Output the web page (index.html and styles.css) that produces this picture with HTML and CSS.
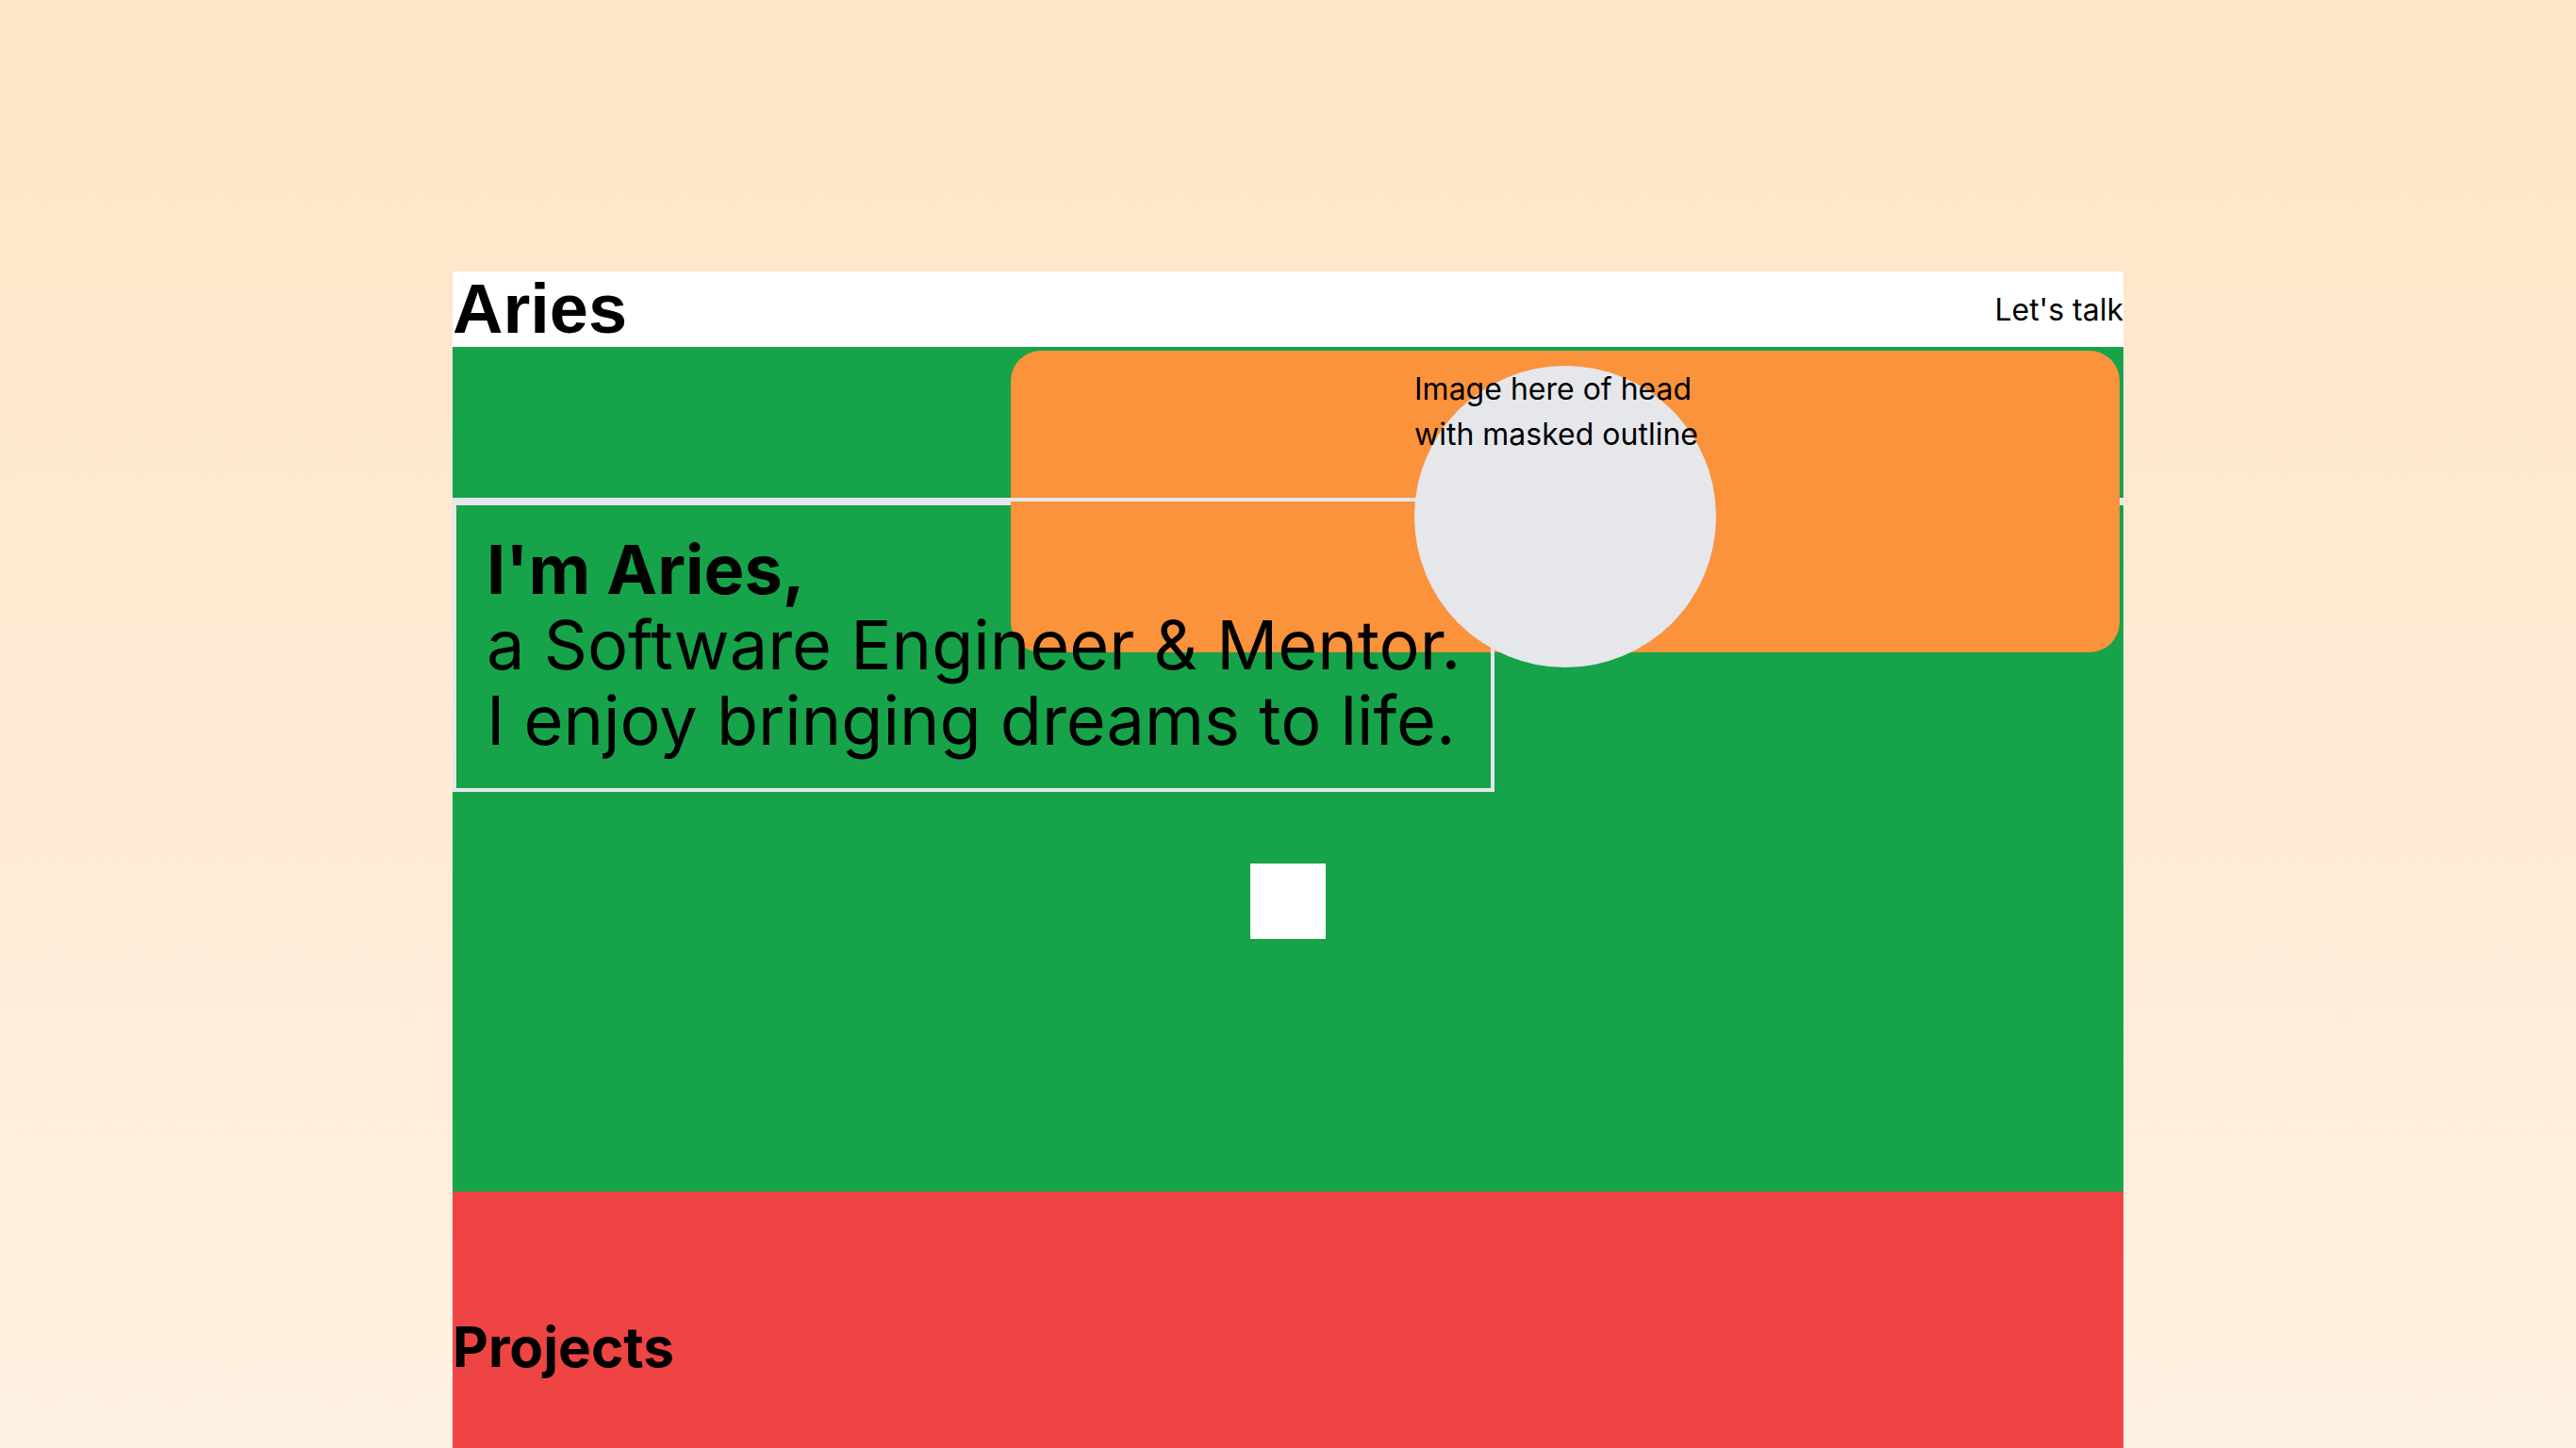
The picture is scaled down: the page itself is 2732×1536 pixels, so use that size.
FILE: index.html
```html
<!DOCTYPE html>
<html lang="en">
<head>
<meta charset="utf-8">
<title>Aries</title>
<link rel="stylesheet" href="styles.css">
</head>
<body>
<div class="page">
  <header class="site-header">
    <h1 class="logo">Aries</h1>
    <a class="cta" href="#contact">Let's talk</a>
  </header>
  <section class="hero">
    <div class="photo-panel">
      <div class="head-photo">
        <p class="photo-note">Image here of head with masked outline</p>
      </div>
    </div>
    <div class="hero-body">
      <div class="intro">
        <p class="intro-name">I'm Aries,</p>
        <p class="intro-line">a Software Engineer &amp; Mentor.</p>
        <p class="intro-line">I enjoy bringing dreams to life.</p>
      </div>
      <div class="square"></div>
    </div>
  </section>
  <section class="projects">
    <h2 class="projects-title">Projects</h2>
  </section>
</div>
</body>
</html>
```

FILE: styles.css
```css
html, body {
  margin: 0;
  padding: 0;
}

body {
  min-height: 100vh;
  background: linear-gradient(to bottom, #ffe5c7 0%, #fff1e2 100%);
  font-family: Inter, "Noto Sans", sans-serif;
  color: #000;
  overflow: hidden;
}

.page {
  width: 1772px;
  margin: 0 auto;
  padding-top: 288px;
}

.site-header {
  height: 80px;
  background: #ffffff;
  display: flex;
  align-items: center;
  justify-content: space-between;
}

.logo {
  margin: 0;
  font-family: "Liberation Sans", Arial, sans-serif;
  font-weight: 700;
  font-size: 74px;
  line-height: 72px;
}

.cta {
  font-family: Inter, sans-serif;
  font-size: 32px;
  color: #000;
  text-decoration: none;
}

.hero {
  position: relative;
  height: 896px;
  box-sizing: border-box;
  padding-top: 160px;
  background: #16a34a;
}

.photo-panel {
  position: absolute;
  top: 4px;
  right: 4px;
  width: 1176px;
  height: 320px;
  background: #fb923c;
  border-radius: 32px;
}

.head-photo {
  position: relative;
  z-index: 2;
  width: 320px;
  height: 320px;
  margin: 16px auto 0;
  border-radius: 50%;
  background: #e5e7eb;
}

.photo-note {
  margin: 0;
  padding-top: 1px;
  font-size: 32px;
  line-height: 48px;
}

.hero-body {
  border-top: 8px solid #e5e7eb;
}

.intro {
  position: relative;
  z-index: 1;
  width: fit-content;
  margin-top: -8px;
  padding: 32px;
  border: 4px solid #e5e7eb;
  font-size: 72px;
  line-height: 80px;
}

.intro p {
  margin: 0;
}

.intro-name {
  font-weight: 700;
}

.square {
  width: 80px;
  height: 80px;
  margin: 76px auto 0;
  background: #ffffff;
}

.projects {
  height: 272px;
  box-sizing: border-box;
  padding-top: 129px;
  background: #ef4444;
}

.projects-title {
  margin: 0;
  font-size: 58.5px;
  font-weight: 700;
  line-height: 72px;
}
```
